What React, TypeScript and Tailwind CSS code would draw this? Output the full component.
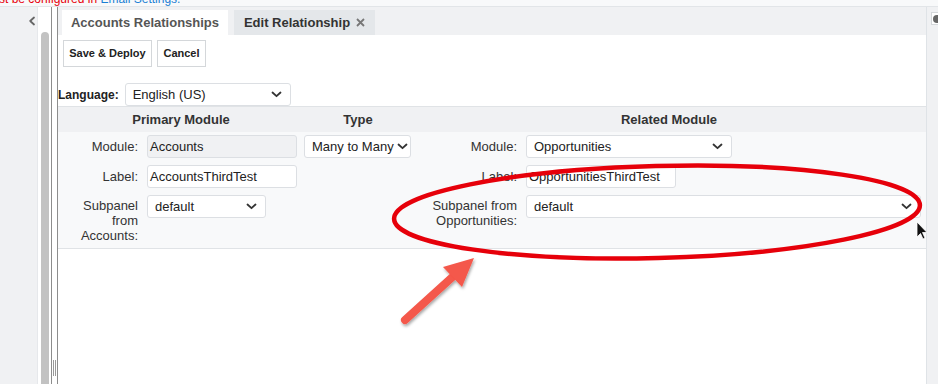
import { ReactNode } from 'react';

const Chevron = ({ className = '' }: { className?: string }) => (
  <svg width="11" height="7" viewBox="0 0 11 7" className={`shrink-0 ${className}`}>
    <path d="M1.5 1.5 L5.5 5.2 L9.5 1.5" fill="none" stroke="#333" strokeWidth="1.8" strokeLinecap="round" strokeLinejoin="round" />
  </svg>
);

const Select = ({ value, className = '' }: { value: string; className?: string }) => (
  <div
    className={`flex h-[23px] items-center justify-between gap-[3px] whitespace-nowrap rounded-[3px] border border-[#dcdfe3] bg-white pl-[7px] pr-[8px] text-[13px] text-[#222] ${className}`}
  >
    <span>{value}</span>
    <Chevron />
  </div>
);

const Input = ({ value, disabled = false, className = '' }: { value: string; disabled?: boolean; className?: string }) => (
  <div
    className={`flex h-[23px] items-center whitespace-nowrap rounded-[3px] border border-[#dcdfe3] pl-[2px] text-[13px] text-[#222] ${
      disabled ? 'bg-[#f0f1f3]' : 'bg-white'
    } ${className}`}
  >
    {value}
  </div>
);

const Label = ({ children, className = '' }: { children: ReactNode; className?: string }) => (
  <div className={`pr-[9px] text-right text-[13px] leading-[15px] text-[#333] ${className}`}>{children}</div>
);

const Annotations = () => (
  <svg className="pointer-events-none absolute left-0 top-0" width="938" height="384" viewBox="0 0 938 384">
    <defs>
      <filter id="sh" x="-20%" y="-20%" width="140%" height="140%">
        <feDropShadow dx="1" dy="2" stdDeviation="1.6" floodColor="#000" floodOpacity="0.35" />
      </filter>
    </defs>
    <ellipse cx="657" cy="212" rx="263" ry="46" fill="none" stroke="#e6000a" strokeWidth="4.5" transform="rotate(-1.5 657 212)" />
    <g filter="url(#sh)">
      <line x1="405" y1="320" x2="458" y2="272" stroke="#f4584b" strokeWidth="8" strokeLinecap="round" />
      <polygon points="474,258 443,267 462,287" fill="#f4584b" />
    </g>
    <path d="M917 222 L917 237 L920.5 233.5 L923 239 L925 238 L922.5 232.5 L927 232.5 Z" fill="#111" stroke="#fff" strokeWidth="0.8" />
  </svg>
);

export default function App() {
  return (
    <div className="relative h-[384px] w-[938px] overflow-hidden bg-white font-['Liberation_Sans',Arial,sans-serif]">
      <div className="h-[7px] overflow-hidden border-b border-[#e2e5e8] bg-[#f8f9fa]">
        <div className="-mt-[7px] -ml-[1px] whitespace-nowrap text-[12px] leading-[12px]">
          <span className="text-[#e8000b]">st be configured in </span>
          <span className="text-[#1a7fd4]">Email Settings.</span>
        </div>
      </div>
      <div className="flex h-[377px]">
        <div className="flex w-[38px] shrink-0 justify-end border-r border-[#e6e8eb] bg-[#f0f1f3] pt-[9px]">
          <svg width="8" height="10" viewBox="0 0 8 10" className="mr-[1px]">
            <path d="M6 1.5 L2.2 5 L6 8.5" fill="none" stroke="#666" strokeWidth="1.8" strokeLinecap="round" strokeLinejoin="round" />
          </svg>
        </div>
        <div className="w-[3px] shrink-0" />
        <div className="mt-[25px] w-[8px] shrink-0 rounded-t-[4px] bg-[#c2c2c2]" />
        <div className="w-[2px] shrink-0" />
        <div className="w-[1px] shrink-0 bg-[#8d8d8d]" />
        <div className="flex w-[5px] shrink-0 flex-col justify-end pb-[8px] pl-[1px]">
          <div className="flex h-[16px] gap-[1px]">
            <div className="w-[1px] bg-[#999]" />
            <div className="w-[1px] bg-[#999]" />
          </div>
        </div>
        <div className="w-[1px] shrink-0 bg-[#8d8d8d]" />

        <div className="flex w-[868px] shrink-0 flex-col">
          <div className="flex h-[28px] gap-[6px] bg-[#f0f1f3] pl-[4px] pt-[3px]">
            <div className="flex w-[166px] items-center justify-center bg-white text-[13px] font-bold text-[#555]">
              Accounts Relationships
            </div>
            <div className="flex w-[141px] items-center justify-center gap-[6px] bg-[#e4e7ea] text-[13px] font-bold text-[#333]">
              Edit Relationship
              <svg width="9" height="9" viewBox="0 0 9 9">
                <path d="M1 1 L8 8 M8 1 L1 8" stroke="#777" strokeWidth="1.8" />
              </svg>
            </div>
          </div>

          <div className="flex gap-[5px] pl-[5px] pt-[5px]">
            <div className="flex h-[27px] w-[89px] items-center justify-center border border-[#d4d7da] bg-white text-[11px] font-bold text-[#222]">
              Save &amp; Deploy
            </div>
            <div className="flex h-[27px] w-[49px] items-center justify-center border border-[#d4d7da] bg-white text-[11px] font-bold text-[#222]">
              Cancel
            </div>
          </div>

          <div className="mt-[16px] flex h-[23px] items-center gap-[6px]">
            <span className="text-[12px] font-bold text-[#222]">Language:</span>
            <Select value="English (US)" className="w-[166px] pl-[7px]" />
          </div>

          <div className="border-y border-[#e0e3e6] bg-[#f8f9fa] pb-[5px]">
            <div className="grid h-[25px] grid-cols-[246px_108px_1fr] items-center bg-[#f0f1f3] text-[13px] font-bold text-[#333]">
              <div className="text-center">Primary Module</div>
              <div className="text-center">Type</div>
              <div className="text-center">Related Module</div>
            </div>
            <div className="grid grid-cols-[89px_157px_108px_114px_1fr] gap-y-[7px] pt-[3px]">
              <Label className="self-center">Module:</Label>
              <Input value="Accounts" disabled className="w-[150px]" />
              <Select value="Many to Many" className="w-[107px] pl-[6px] pr-[4px]" />
              <Label className="self-center">Module:</Label>
              <Select value="Opportunities" className="w-[206px]" />

              <Label className="self-center">Label:</Label>
              <Input value="AccountsThirdTest" className="w-[150px]" />
              <div />
              <Label className="self-center">Label:</Label>
              <Input value="OpportunitiesThirdTest" className="w-[150px]" />

              <Label className="pt-[3px]">
                Subpanel
                <br />
                from
                <br />
                Accounts:
              </Label>
              <Select value="default" className="w-[119px] pl-[5px]" />
              <div />
              <Label className="pt-[3px]">
                Subpanel from
                <br />
                Opportunities:
              </Label>
              <Select value="default" className="w-[395px]" />
            </div>
          </div>
        </div>

        <div className="flex-1 border-l border-[#dfe3e7] bg-[#f0f1f3] pl-[4px] pt-[5px]">
          <div className="flex h-[13px] w-[14px] items-center border border-[#d4d7da] bg-white pl-[1px]">
            <div className="h-[8px] w-[8px] rounded-full bg-[#666]" />
          </div>
        </div>
      </div>
      <Annotations />
    </div>
  );
}
